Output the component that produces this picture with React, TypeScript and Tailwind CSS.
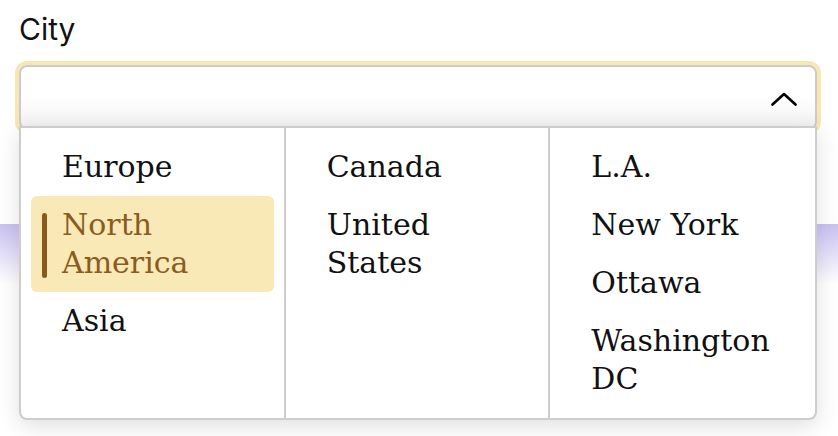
type Column = { items: string[]; active?: string }

const COLUMNS: Column[] = [
  { items: ['Europe', 'North America', 'Asia'], active: 'North America' },
  { items: ['Canada', 'United States'] },
  { items: ['L.A.', 'New York', 'Ottawa', 'Washington DC'] },
]

const slab = { fontFamily: '"DejaVu Serif", "Liberation Serif", serif' }

function MenuColumn({ column }: { column: Column }) {
  return (
    <ul className="flex flex-col px-[10px] pt-[10px] pb-[10px]">
      {column.items.map((item) => {
        const on = item === column.active
        return (
          <li
            key={item}
            className={`relative rounded-md py-[10px] pl-[31px] pr-3 text-[30px] leading-[38px] ${
              on ? 'bg-[#f9e9b6] text-[#8a5c1e]' : 'text-[#111]'
            }`}
          >
            {on && (
              <span className="absolute left-[11px] top-[17px] bottom-[14px] w-[5px] rounded-full bg-[#8a5a1a]" />
            )}
            {item}
          </li>
        )
      })}
    </ul>
  )
}

export default function App() {
  return (
    <div
      className="relative h-[436px] w-[838px] overflow-hidden bg-white"
      style={{ fontFamily: 'Inter, "Liberation Sans", sans-serif' }}
    >
      <div className="pl-[19px] pr-[21px] pt-[11px]">
        <label className="block text-[30px] leading-[36px] text-[#111]">City</label>
        <div className="relative mt-[18px]">
          <div className="flex h-[65px] items-center justify-end rounded-lg border-2 border-[#cbcbcb] bg-gradient-to-b from-white via-white to-[#f1f1f1] pr-[18px] ring-4 ring-[#f9e7b2]">
            <svg width="26" height="14" viewBox="0 0 26 14" fill="none" className="mt-[2px]">
              <polyline
                points="1.5,12.5 13,2 24.5,12.5"
                stroke="#000"
                strokeWidth="2.6"
                strokeLinecap="round"
                strokeLinejoin="round"
              />
            </svg>
          </div>

          {/* open menu */}
          <div
            className="absolute left-0 right-0 top-[61px] z-10 grid grid-cols-3 divide-x-2 divide-[#cdcdcd] rounded-b-lg border-2 border-[#cdcdcd] bg-white shadow-[0_6px_22px_rgba(0,0,0,0.13)]"
            style={slab}
          >
            {COLUMNS.map((c, i) => (
              <MenuColumn key={i} column={c} />
            ))}
          </div>
        </div>
      </div>

      <div className="mt-[94px] h-[60px] bg-gradient-to-b from-[#c9c1f1] to-white" />
    </div>
  )
}
